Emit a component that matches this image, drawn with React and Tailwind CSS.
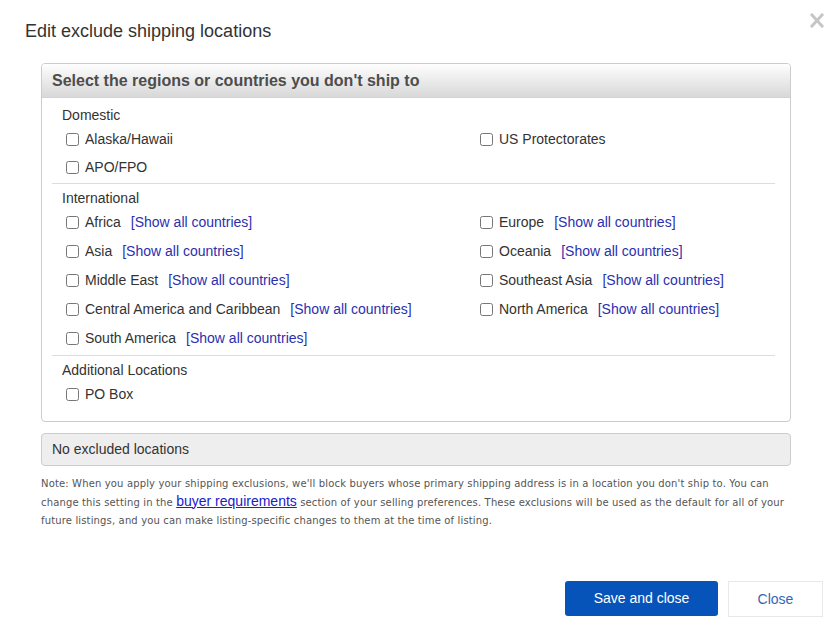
import React from 'react';

const DOMESTIC = [
    [{ label: 'Alaska/Hawaii' }, { label: 'US Protectorates' }],
    [{ label: 'APO/FPO' }, null],
];

const INTERNATIONAL = [
    [{ label: 'Africa', more: true }, { label: 'Europe', more: true }],
    [{ label: 'Asia', more: true }, { label: 'Oceania', more: true }],
    [{ label: 'Middle East', more: true }, { label: 'Southeast Asia', more: true }],
    [{ label: 'Central America and Caribbean', more: true }, { label: 'North America', more: true }],
    [{ label: 'South America', more: true }, null],
];

const ADDITIONAL = [[{ label: 'PO Box' }, null]];

// ─── Single checkbox item ─────────────────────────────────────────────────────
function Option({ item }) {
    if (!item) return <div />;
    return (
        <label className="flex items-center">
            <input type="checkbox" className="w-[13px] h-[13px] m-0 mr-[6px] accent-[#0654ba]" />
            <span>{item.label}</span>
            {item.more && (
                <a href="#" className="ml-[10px] text-[#2b2fae]">[Show all countries]</a>
            )}
        </label>
    );
}

// ─── Section ──────────────────────────────────────────────────────────────────
function Section({ title, rows, rowH, top }) {
    return (
        <div className={top}>
            <div className="pl-[10px] h-5 leading-5">{title}</div>
            {rows.map((row, i) => (
                <div key={i} className={`grid grid-cols-[414px_1fr] pl-[14px] items-center ${rowH}`}>
                    <Option item={row[0]} />
                    <Option item={row[1]} />
                </div>
            ))}
        </div>
    );
}

export default function App() {
    return (
        <div className="w-[834px] h-[638px] bg-white relative text-[#333] text-[14px]" style={{ fontFamily: '"Liberation Sans", Arial, sans-serif' }}>
            {/* close X */}
            <button className="absolute left-[810px] top-[13px] w-[14px] h-[15px]" aria-label="close">
                <svg viewBox="0 0 14 15" className="w-[14px] h-[15px]">
                    <path d="M2 2 L12 13 M12 2 L2 13" stroke="#c6c6c6" strokeWidth="3" strokeLinecap="square" />
                </svg>
            </button>

            <div className="pl-[25px] pt-[20px] h-[63px]">
                <h2 className="text-[18px] leading-[22px] text-[#333]">Edit exclude shipping locations</h2>
            </div>

            <div className="ml-[41px] w-[750px]">
                {/* Regions panel */}
                <div className="border border-[#cccccc] rounded-[4px] overflow-hidden">
                    <div className="h-[34px] px-[10px] flex items-center bg-gradient-to-b from-[#fefefe] to-[#d8d8d8] border-b border-[#d4d4d4]">
                        <span className="text-[16px] font-bold text-[#4d4d4d]">Select the regions or countries you don't ship to</span>
                    </div>
                    <div className="pl-[10px] pr-[15px] pb-[12px]">
                        <Section title="Domestic" rows={DOMESTIC} rowH="h-[28px]" top="pt-[7px] pb-[2px]" />
                        <div className="h-px bg-[#dddddd]" />
                        <Section title="International" rows={INTERNATIONAL} rowH="h-[29px]" top="pt-[4px] pb-[2px]" />
                        <div className="h-px bg-[#dddddd]" />
                        <Section title="Additional Locations" rows={ADDITIONAL} rowH="h-[29px]" top="pt-[4px]" />
                    </div>
                </div>

                {/* Summary */}
                <div className="mt-[11px] h-[33px] px-[10px] flex items-center bg-[#eeeeee] border border-[#cccccc] rounded-[4px]">
                    No excluded locations
                </div>

                {/* Note */}
                <p className="mt-[9px] w-[758px] text-[10px] leading-[18.5px] tracking-[0.15px] text-[#555]" style={{ fontFamily: '"DejaVu Sans", Verdana, sans-serif' }}>
                    Note: When you apply your shipping exclusions, we'll block buyers whose primary shipping address is in a location you don't ship to. You can change this setting in the{' '}
                    <a href="#" className="text-[14px] leading-[14px] tracking-normal underline text-[#2020c8]" style={{ fontFamily: '"Liberation Sans", Arial, sans-serif' }}>buyer requirements</a>{' '}
                    section of your selling preferences. These exclusions will be used as the default for all of your future listings, and you can make listing-specific changes to them at the time of listing.
                </p>
            </div>

            {/* Buttons */}
            <div className="absolute left-[565px] top-[581px] flex gap-[10px]">
                <button className="w-[153px] h-[35px] bg-[#0654ba] text-white rounded-[3px] text-[14px]">Save and close</button>
                <button className="w-[95px] h-[36px] bg-white border border-[#e8e8e8] text-[#3665b3] text-[14px]">Close</button>
            </div>
        </div>
    );
}
